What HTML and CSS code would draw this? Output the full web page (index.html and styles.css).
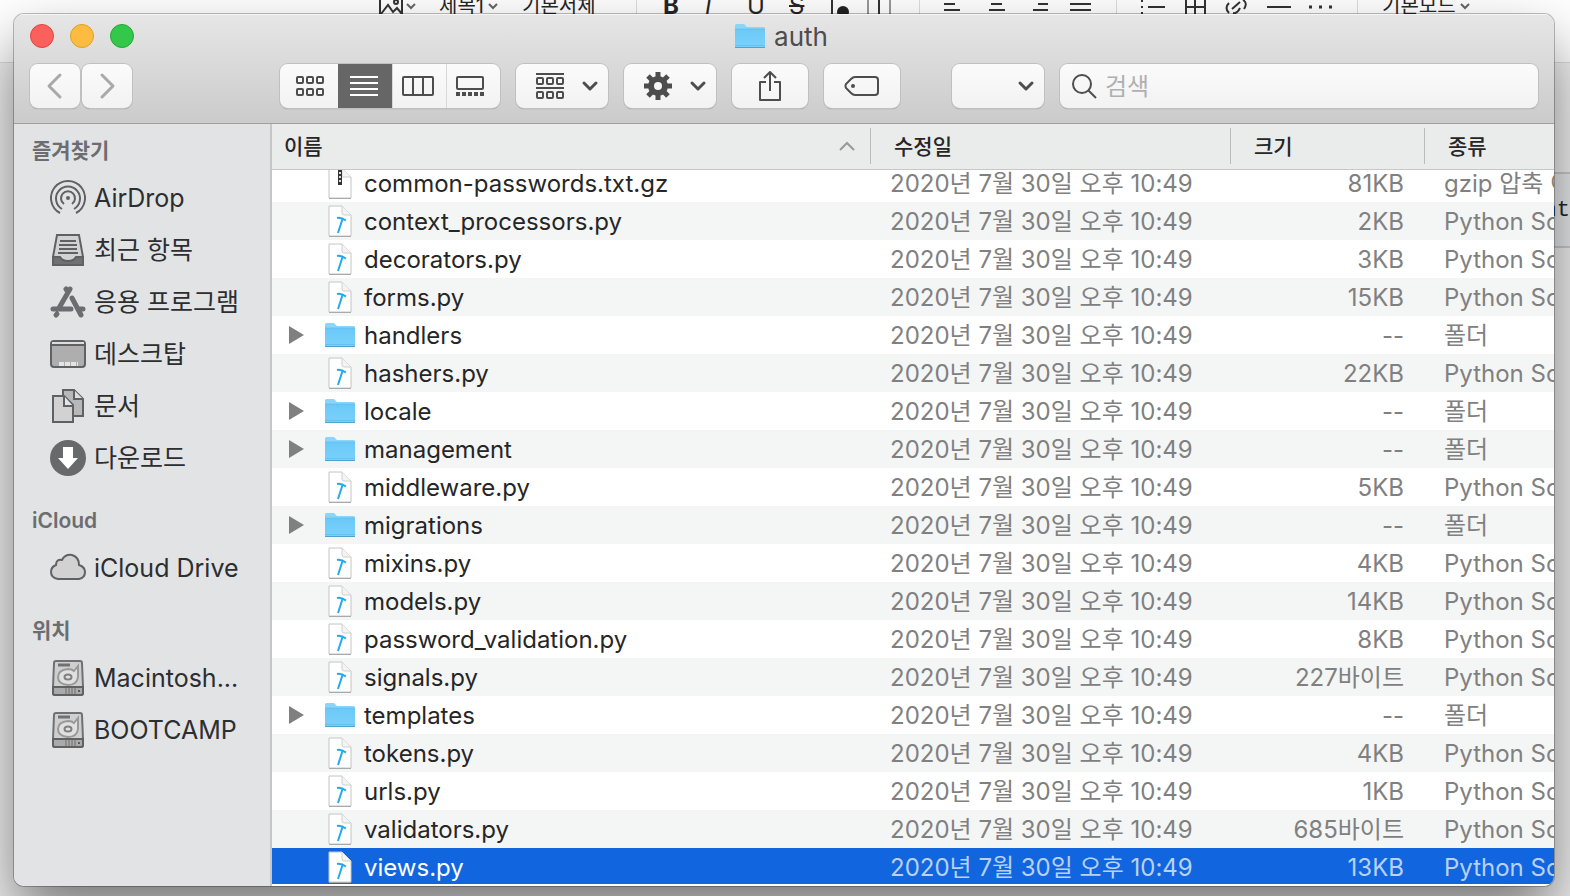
FILE: index.html
```html
<!DOCTYPE html>
<html lang="ko">
<head>
    <meta charset="UTF-8">
    <meta name="viewport" content="width=device-width, initial-scale=1.0">
    <title>auth</title>
    <link rel="stylesheet" href="styles.css">
</head>
<body>
    <!-- iconos compartidos -->
    <svg class="sprites" aria-hidden="true">
        <defs>
            <linearGradient id="blue" x1="0" y1="0" x2="0" y2="1">
                <stop offset="0" stop-color="#6bc8f7"/>
                <stop offset="1" stop-color="#7ad2fb"/>
            </linearGradient>
        </defs>
        <symbol id="folder" viewBox="0 1 32 28">
            <path d="M1 3.500Q1 2 2.500 2H10L13 5H29.500Q31 5 31 6.500V12H1Z" fill="#8ad5f8"/>
            <path d="M1 7H31V25Q31 26 30 26H2Q1 26 1 25Z" fill="url(#blue)"/>
            <path d="M1 7H31M1 23.500H31" stroke="#5cb8e8" stroke-width="1" opacity=".6"/>
            <path d="M1 25.500H31" stroke="#4ba3d0" stroke-width="1"/>
        </symbol>
        <symbol id="script" viewBox="0 1 26 34">
            <path d="M2 2H15L24 11V32H2Z" fill="#fff" stroke="#c4c4c4"/>
            <path d="M15 2V9Q15 11 17 11H24" fill="#f4f4f4" stroke="#cfcfcf"/>
            <path d="M2 32.500H24" stroke="#aaa"/>
            <path d="M10 14Q14 13 19 16.500M15.500 15L11 29" fill="none" stroke="#22aaf0" stroke-width="2"/>
        </symbol>
        <symbol id="zip" viewBox="0 1 26 34">
            <path d="M2 2H15L24 11V32H2Z" fill="#fff" stroke="#c4c4c4"/>
            <path d="M15 2V11H24" fill="#f4f4f4" stroke="#cfcfcf"/>
            <path d="M2 32.500H24" stroke="#aaa"/>
            <path d="M13 2V19" stroke="#333" stroke-width="4"/>
            <path d="M13 2V18" stroke="#ddd" stroke-width="2" stroke-dasharray="2 2"/>
        </symbol>
        <symbol id="chevron" viewBox="0 0 18 12">
            <path d="M3 3L9 9L15 3" fill="none" stroke="#4d4d4d" stroke-width="3" stroke-linecap="round" stroke-linejoin="round"/>
        </symbol>
        <symbol id="disk" viewBox="0 0 36 36">
            <path d="M6 1H30Q32 1 32 3L33 27V33Q33 35 31 35H5Q3 35 3 33V27L4 3Q4 1 6 1Z" fill="#cfcfcf" stroke="#707173" stroke-width="2"/>
            <path d="M3 27H33V33Q33 35 31 35H5Q3 35 3 33Z" fill="#aaa" stroke="#606163" stroke-width="2"/>
            <path d="M8 5H20" stroke="#707173" stroke-width="3"/>
            <path d="M24 11L28 6V17Q27 25 18 25Q8 24 8 17Q8 10 18 9Q22 9 24 11Z" fill="#e0e0e0" stroke="#999" stroke-width="2"/>
            <ellipse cx="18" cy="17" rx="3.500" ry="2.500" fill="none" stroke="#808080" stroke-width="2"/>
            <path d="M16 28V34M19 28V34M22 28V34M25 28V34" stroke="#707173"/>
            <circle cx="29" cy="31" r="1" fill="#444"/>
        </symbol>
    </svg>

    <!-- editor de fondo -->
    <div class="editor">
        <div class="editor-bar">
            <svg width="38" height="20" fill="none" stroke="#333" stroke-width="2"><path d="M1 0V14M23 0V14M2 14L9 5L14 12L18 8L23 14"/><circle cx="17" cy="2" r="2"/><path d="M28 4L32 8L36 4" stroke="#666"/></svg>
            <span class="bar-style">제목1</span>
            <svg width="10" height="20" fill="none" stroke="#666" stroke-width="2"><path d="M1 4L5 8L9 4"/></svg>
            <span class="bar-font">기본서체</span>
            <i class="bar-line first"></i>
            <b>B</b>
            <em>I</em>
            <u>U</u>
            <s>S</s>
            <svg width="64" height="20" fill="none" stroke="#333" stroke-width="2"><path d="M1 0V14M48 0V14"/><path d="M37 0V14M59 0V14" stroke="#999"/><circle cx="12" cy="12" r="6" fill="#222" stroke="none"/></svg>
            <i class="bar-line"></i>
            <svg width="148" height="20" fill="none" stroke="#333" stroke-width="2"><path d="M0 4H11M0 10H16M47 4H58M45 10H61M94 4H104M89 10H104M126 4H147M126 10H147"/></svg>
            <i class="bar-line"></i>
            <svg width="192" height="20" fill="none" stroke="#333" stroke-width="2"><path d="M1 0V2M1 6V8M1 12V14M7 7H24M45 0V14M54 0V14M64 0V14M44 7H65M88 3Q83 8 88 13M92 13Q96 14 99 8M91 9L99 2M102 0Q107 3 103 9M126 7H150"/><path d="M168 7H171M178 7H181M188 7H191" stroke-width="3"/></svg>
            <i class="bar-line"></i>
            <span class="bar-mode">기본모드</span>
            <svg width="10" height="20" fill="none" stroke="#666" stroke-width="2"><path d="M1 4L5 8L9 4"/></svg>
        </div>
        <div class="editor-code">nt</div>
    </div>

    <main class="window">
        <header class="toolbar">
            <div class="title-row">
                <div class="lights">
                    <button class="light red" aria-label="닫기"></button>
                    <button class="light yellow" aria-label="최소화"></button>
                    <button class="light green" aria-label="확대"></button>
                </div>
                <h1><svg width="32" height="28"><use href="#folder"/></svg>auth</h1>
            </div>
            <div class="tools">
                <div class="nav">
                    <button class="tool" aria-label="뒤로"><svg width="18" height="28" fill="none" stroke="#a9a9a9" stroke-width="3" stroke-linecap="round" stroke-linejoin="round"><path d="M14 3L3 14L14 25"/></svg></button>
                    <button class="tool" aria-label="앞으로"><svg width="18" height="28" fill="none" stroke="#a9a9a9" stroke-width="3" stroke-linecap="round" stroke-linejoin="round"><path d="M4 3L15 14L4 25"/></svg></button>
                </div>
                <div class="views">
                    <button aria-label="아이콘"><svg width="30" height="24" fill="none" stroke="#4d4d4d" stroke-width="2"><rect x="2" y="3" width="6" height="6" rx="1"/><rect x="12" y="3" width="6" height="6" rx="1"/><rect x="22" y="3" width="6" height="6" rx="1"/><rect x="2" y="15" width="6" height="6" rx="1"/><rect x="12" y="15" width="6" height="6" rx="1"/><rect x="22" y="15" width="6" height="6" rx="1"/></svg></button>
                    <button class="active" aria-label="목록"><svg width="28" height="24" stroke="#fff" stroke-width="2"><path d="M0 3H28M0 9H28M0 15H28M0 21H28"/></svg></button>
                    <button aria-label="계층"><svg width="32" height="24" fill="none" stroke="#4d4d4d" stroke-width="2"><rect x="1" y="3" width="30" height="18" rx="1"/><path d="M11 3V21M21 3V21"/></svg></button>
                    <button aria-label="갤러리"><svg width="30" height="24" fill="none" stroke="#4d4d4d" stroke-width="2"><rect x="2" y="3" width="26" height="12" rx="1"/><path d="M1 20H29" stroke-width="4" stroke-dasharray="4 2"/></svg></button>
                </div>
                <button class="tool wide" aria-label="정렬"><svg width="30" height="28" fill="none" stroke="#4d4d4d" stroke-width="2"><path d="M1 2H29M1 16H29"/><rect x="2" y="6" width="6" height="6" rx="1"/><rect x="12" y="6" width="6" height="6" rx="1"/><rect x="22" y="6" width="6" height="6" rx="1"/><rect x="2" y="20" width="6" height="6" rx="1"/><rect x="12" y="20" width="6" height="6" rx="1"/><rect x="22" y="20" width="6" height="6" rx="1"/></svg><svg width="18" height="12"><use href="#chevron"/></svg></button>
                <button class="tool wide" aria-label="동작"><svg width="30" height="30" viewBox="-15 -15 30 30"><path d="M0 -14V14M-14 0H14M-10 -10L10 10M-10 10L10 -10" stroke="#4d4d4d" stroke-width="5"/><circle r="7" fill="none" stroke="#4d4d4d" stroke-width="6"/><circle r="4" fill="#f8f8f8"/></svg><svg width="18" height="12"><use href="#chevron"/></svg></button>
                <button class="tool" aria-label="공유"><svg width="24" height="32" fill="none" stroke="#4d4d4d" stroke-width="2"><path d="M8 12H2V30H22V12H16M12 21V3M6 8L12 2L18 8" stroke-linejoin="round"/></svg></button>
                <button class="tool" aria-label="태그"><svg width="36" height="24" fill="none" stroke="#4d4d4d" stroke-width="2"><path d="M11 3H31Q34 3 34 6V18Q34 21 31 21H11Q9 21 7 19L2 14Q1 12 2 10L7 5Q9 3 11 3Z"/><circle cx="9" cy="12" r="2" fill="#4d4d4d" stroke="none"/></svg></button>
                <button class="tool wide last" aria-label="더 보기"><svg width="18" height="12"><use href="#chevron"/></svg></button>
                <label class="search">
                    <svg width="26" height="26" fill="none" stroke="#4d4d4d" stroke-width="2"><circle cx="11" cy="11" r="9"/><path d="M17 17L25 25"/></svg>
                    <input type="text" placeholder="검색" aria-label="검색">
                </label>
            </div>
        </header>

        <div class="content">
            <nav class="sidebar">
                <h2>즐겨찾기</h2>
                <ul>
                    <li><a href="#"><svg width="36" height="36" fill="none" stroke="#606163" stroke-width="2"><path d="M10 33A17 17 0 1 1 26 33"/><path d="M12 29A12 12 0 1 1 24 29"/><path d="M14 24A7 7 0 1 1 22 24"/><circle cx="18" cy="18" r="2" fill="#606163" stroke="none"/></svg>AirDrop</a></li>
                    <li><a href="#"><svg width="36" height="36" fill="none" stroke="#606163" stroke-width="2"><path d="M7 3H29L33 25V33H3V25Z" fill="#d2d2d2"/><path d="M3 25H10Q12 29 18 29Q24 29 26 25H33V33H3Z" fill="#707173"/><path d="M10 9H26M9 13H27M9 17H27M8 21H28"/></svg>최근 항목</a></li>
                    <li><a href="#"><svg width="36" height="36" fill="none" stroke="#6c6d70" stroke-width="5" stroke-linecap="round"><path d="M20 5L9 24M16 5L18 8M22 14L31 31M3 25H21M30 25H33M7 30L6 31"/></svg>응용 프로그램</a></li>
                    <li><a href="#"><svg width="36" height="36" stroke="#606163" stroke-width="2"><rect x="1" y="5" width="34" height="26" rx="3" fill="#aeaeae"/><path d="M2 7H34" stroke="#ddd"/><path d="M1 9H35"/><path d="M9 28H28" stroke="#e4e4e4" stroke-width="4" stroke-dasharray="5 1"/></svg>데스크탑</a></li>
                    <li><a href="#"><svg width="36" height="36" stroke="#606163" stroke-width="2"><path d="M13 2H24L33 11V28H13Z" fill="#b8b8b8"/><path d="M24 2V11H33" fill="#ddd"/><path d="M3 8H14L23 17V34H3Z" fill="#d2d2d2"/><path d="M14 8V18H23" fill="#e4e4e4"/></svg>문서</a></li>
                    <li><a href="#"><svg width="36" height="36"><circle cx="18" cy="18" r="18" fill="#68696b"/><path d="M13 7H23V18H28L18 29L8 18H13Z" fill="#fff"/></svg>다운로드</a></li>
                </ul>
                <h2>iCloud</h2>
                <ul>
                    <li><a href="#"><svg width="36" height="36"><path d="M8 29Q1 28 1 22Q1 17 6 15Q6 9 12 10Q15 4 22 5Q29 7 29 15Q35 17 35 22Q35 28 29 29Z" fill="#d2d2d2" stroke="#606163" stroke-width="2"/></svg>iCloud Drive</a></li>
                </ul>
                <h2>위치</h2>
                <ul>
                    <li><a href="#"><svg width="36" height="36"><use href="#disk"/></svg>Macintosh...</a></li>
                    <li><a href="#"><svg width="36" height="36"><use href="#disk"/></svg>BOOTCAMP</a></li>
                </ul>
            </nav>

            <section class="files">
                <table>
                    <thead>
                        <tr>
                            <th class="col-name"><div>이름<svg width="16" height="10" fill="none" stroke="#999" stroke-width="2"><path d="M1 9L8 2L15 9"/></svg></div></th>
                            <th class="col-date"><div>수정일</div></th>
                            <th class="col-size"><div>크기</div></th>
                            <th class="col-kind"><div>종류</div></th>
                        </tr>
                    </thead>
                    <tbody id="lista"></tbody>
                </table>
            </section>
        </div>
    </main>

    <script src="script.js"></script>
</body>
</html>
```
FILE: styles.css
```css
* {
    box-sizing: border-box;
}

body {
    font-family: Inter, 'Noto Sans CJK KR', sans-serif;
    margin: 0;
    height: 100vh;
    overflow: hidden;
    position: relative;
    display: flex;
    background-color: #fff;
    color: #262626;
}

h1, h2, ul {
    margin: 0;
    padding: 0;
    list-style: none;
}

button {
    border: none;
    padding: 0;
    cursor: pointer;
}

svg {
    flex-shrink: 0;
}

.sprites {
    position: absolute;
    width: 0;
    height: 0;
}

/* editor detrás de la ventana */
.editor {
    position: absolute;
    inset: 0;
    background-color: #f2f2f2;
}

.editor-bar {
    height: 63px;
    border-bottom: 1px solid #ddd;
    background-color: #fff;
    padding-left: 379px;
    display: flex;
    align-items: flex-start;
    font-size: 20px;
    line-height: 24px;
    white-space: nowrap;
}

.editor-bar > * {
    flex-shrink: 0;
}

.editor-bar span,
.editor-bar b,
.editor-bar em,
.editor-bar u,
.editor-bar s {
    margin-top: -6px;
}

.bar-style {
    margin-left: 22px;
    width: 49px;
}

.bar-font {
    margin-left: 24px;
    width: 74px;
}

.bar-line {
    width: 1px;
    height: 14px;
    margin: 0 24px;
    background-color: #ddd;
}

.bar-line.first {
    margin: 0 26px 0 40px;
}

.editor-bar b,
.editor-bar em,
.editor-bar u,
.editor-bar s {
    width: 42px;
    font-size: 24px;
    text-decoration-thickness: 2px;
}

.editor-bar u {
    text-decoration: none;
}

.editor-bar .bar-mode {
    width: 78px;
}

.editor-code {
    margin: 109px 0 0 50%;
    height: 76px;
    border: 2px solid #ccc;
    border-right: none;
    background-color: #eaecee;
    text-align: right;
    font: 22px/74px 'Liberation Mono', monospace;
}

/* ventana */
.window {
    position: relative;
    flex: 1;
    min-width: 0;
    margin: 14px 16px 10px 14px;
    display: flex;
    flex-direction: column;
    border-radius: 10px;
    overflow: hidden;
    background-color: #fff;
    box-shadow: 0 0 0 1px rgba(0,0,0,0.25), 0 30px 60px rgba(0,0,0,0.5);
}

.toolbar {
    height: 110px;
    padding: 0 16px;
    background: linear-gradient(#e6e6e6, #cbcbcb);
    border-bottom: 1px solid #a0a0a0;
    box-shadow: inset 0 1px #f5f5f5;
}

.title-row {
    display: grid;
    grid-template-columns: 1fr auto 1fr;
    align-items: center;
    height: 50px;
}

.lights {
    display: flex;
    gap: 16px;
    margin-top: -6px;
}

.light {
    width: 24px;
    height: 24px;
    border-radius: 50%;
}

.red {
    background-color: #fc605c;
    border: 1px solid #e0443f;
}

.yellow {
    background-color: #fdbc40;
    border: 1px solid #dfa023;
}

.green {
    background-color: #34c84a;
    border: 1px solid #24a732;
}

h1 {
    display: flex;
    align-items: center;
    gap: 8px;
    font-size: 26px;
    font-weight: 400;
    line-height: 44px;
    margin-bottom: 4px;
    padding-right: 6px;
    color: #4d4d4d;
}

.tools {
    display: flex;
    gap: 16px;
}

.nav {
    display: flex;
    gap: 2px;
    margin-right: 132px;
}

.nav .tool {
    width: 50px;
}

.tool,
.views,
.search {
    height: 44px;
    border-radius: 8px;
    background: linear-gradient(#fbfbfb, #f2f2f2);
    box-shadow: 0 0 0 1px #c0c0c0, 0 1px 1px #888;
}

.tool {
    width: 76px;
    flex-shrink: 0;
    display: flex;
    align-items: center;
    justify-content: center;
}

.tool.wide {
    width: 92px;
    justify-content: space-between;
    padding: 0 9px 0 19px;
}

.tool.last {
    margin-left: 36px;
    justify-content: flex-end;
}

.views {
    display: flex;
    overflow: hidden;
    flex-shrink: 0;
}

.views button {
    width: 54px;
    padding-right: 4px;
    display: flex;
    align-items: center;
    justify-content: center;
    background: none;
    border-left: 1px solid #d8d8d8;
}

.views button:first-child {
    width: 58px;
    padding: 0 0 0 2px;
    border: none;
}

.views button:last-child {
    padding-right: 8px;
}

.views .active {
    background-color: #666;
    border-color: #666;
}

.search {
    flex: 1;
    min-width: 0;
    display: flex;
    align-items: center;
    gap: 8px;
    padding: 0 11px;
}

.search input {
    flex: 1;
    min-width: 0;
    border: none;
    outline: none;
    background: none;
    padding: 0;
    font: inherit;
    font-size: 24px;
}

.search input::placeholder {
    color: #b0b0b0;
}

.content {
    flex: 1;
    min-height: 0;
    display: flex;
}

/* barra lateral */
.sidebar {
    width: 258px;
    flex-shrink: 0;
    background-color: #e2e3e5;
    border-right: 2px solid #c6c6c8;
    padding-top: 8px;
}

.sidebar h2 {
    padding-left: 18px;
    font-size: 21px;
    font-weight: 600;
    line-height: 38px;
    color: #6c6d70;
}

.sidebar ul {
    padding: 2px 0 18px 36px;
}

.sidebar a {
    display: flex;
    align-items: center;
    gap: 8px;
    height: 52px;
    font-size: 25px;
    line-height: 36px;
    white-space: nowrap;
    color: #2d2e30;
    text-decoration: none;
}

/* lista de archivos */
.files {
    flex: 1;
    min-width: 0;
    overflow: hidden;
    border-bottom: 2px solid #fff;
}

table {
    width: 100%;
    table-layout: fixed;
    border-collapse: collapse;
}

thead {
    position: relative;
    z-index: 1;
}

th {
    height: 40px;
    padding: 0;
    text-align: left;
    font-size: 21px;
    font-weight: 500;
    background-color: #eaebeb;
}

th div {
    display: flex;
    align-items: center;
    justify-content: space-between;
    height: 46px;
    margin-bottom: -6px;
    padding: 0 16px 4px 12px;
    background: linear-gradient(#bbb, #bbb) right 4px / 1px 36px no-repeat, #eaebeb;
    border-bottom: 1px solid #c8c8c8;
}

th:not(:first-child) div {
    padding-left: 23px;
}

th:last-child div {
    background: #eaebeb;
}

th svg {
    margin-top: 3px;
}

.col-date {
    width: 360px;
}

.col-size {
    width: 194px;
}

.col-kind {
    width: 129px;
}

td {
    height: 38px;
    padding: 2px 0 0;
    font-size: 24px;
    line-height: 36px;
    white-space: nowrap;
    overflow: hidden;
    color: #808080;
}

tbody tr:nth-child(even) {
    background-color: #f4f5f5;
}

td:nth-child(2) {
    padding-left: 19px;
}

td:nth-child(3) {
    padding-right: 21px;
    text-align: right;
}

td:nth-child(4) {
    padding-left: 19px;
}

.file {
    display: flex;
    align-items: center;
    color: #262626;
}

.arrow {
    width: 15px;
    height: 18px;
    margin: 0 20px 2px 17px;
}

.arrow.open {
    background-color: #808080;
    clip-path: polygon(0 0, 100% 50%, 0 100%);
}

.file svg {
    width: 32px;
    height: 34px;
    margin-right: 8px;
}

tbody .selected {
    background-color: #1166df;
}

.selected td {
    color: #b8d1f5;
}

.selected .file {
    color: #fff;
}
```
FILE: script.js
```js
const fecha = '2020년 7월 30일 오후 10:49';

const archivos = [
    ['common-passwords.txt.gz', '81KB', 'gzip 압축 아카이브', 'zip'],
    ['context_processors.py', '2KB'],
    ['decorators.py', '3KB'],
    ['forms.py', '15KB'],
    ['handlers', '--', '폴더', 'folder'],
    ['hashers.py', '22KB'],
    ['locale', '--', '폴더', 'folder'],
    ['management', '--', '폴더', 'folder'],
    ['middleware.py', '5KB'],
    ['migrations', '--', '폴더', 'folder'],
    ['mixins.py', '4KB'],
    ['models.py', '14KB'],
    ['password_validation.py', '8KB'],
    ['signals.py', '227바이트'],
    ['templates', '--', '폴더', 'folder'],
    ['tokens.py', '4KB'],
    ['urls.py', '1KB'],
    ['validators.py', '685바이트'],
    ['views.py', '13KB']
];

const lista = document.getElementById('lista');

archivos.forEach(function([nombre, tamano, tipo = 'Python Script', icono = 'script']) {
    const fila = document.createElement('tr');
    const flecha = icono === 'folder' ? 'arrow open' : 'arrow';
    fila.innerHTML = `
        <td><div class="file"><span class="${flecha}"></span><svg><use href="#${icono}"/></svg>${nombre}</div></td>
        <td>${fecha}</td>
        <td>${tamano}</td>
        <td>${tipo}</td>`;
    if (nombre === 'views.py') {
        fila.className = 'selected';
    }
    lista.appendChild(fila);
});
```
